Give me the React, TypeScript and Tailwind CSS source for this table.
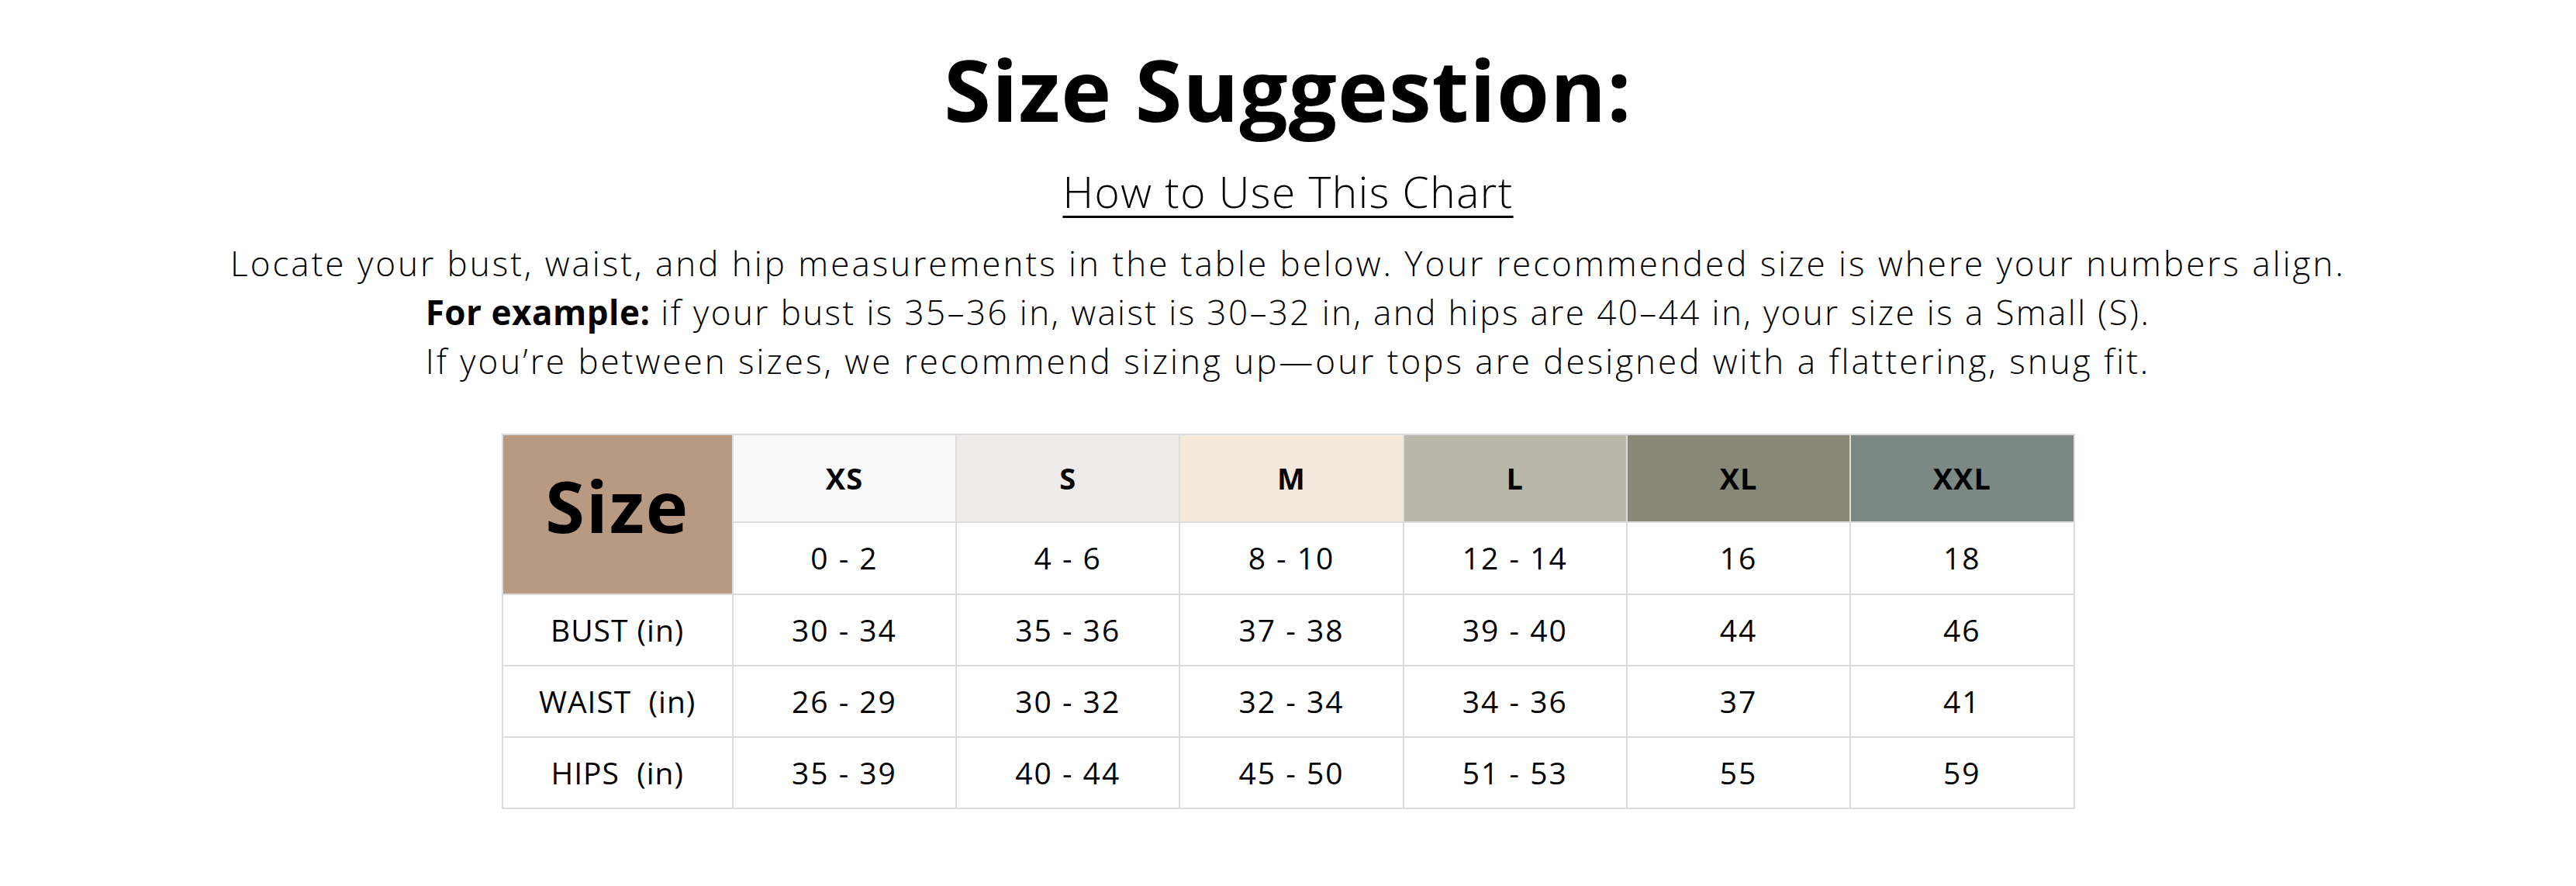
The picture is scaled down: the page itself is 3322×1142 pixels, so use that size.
import React from 'react';

const sizes = [
  { label: 'XS', range: '0 - 2', bust: '30 - 34', waist: '26 - 29', hips: '35 - 39', bg: 'bg-[#f9f9f9]' },
  { label: 'S', range: '4 - 6', bust: '35 - 36', waist: '30 - 32', hips: '40 - 44', bg: 'bg-[#efebea]' },
  { label: 'M', range: '8 - 10', bust: '37 - 38', waist: '32 - 34', hips: '45 - 50', bg: 'bg-[#f5e9db]' },
  { label: 'L', range: '12 - 14', bust: '39 - 40', waist: '34 - 36', hips: '51 - 53', bg: 'bg-[#b8b7a9]' },
  { label: 'XL', range: '16', bust: '44', waist: '37', hips: '55', bg: 'bg-[#888879]' },
  { label: 'XXL', range: '18', bust: '46', waist: '41', hips: '59', bg: 'bg-[#7b8884]' },
];

const rows: { name: string; key: 'bust' | 'waist' | 'hips' }[] = [
  { name: 'BUST (in)', key: 'bust' },
  { name: 'WAIST\u00a0 (in)', key: 'waist' },
  { name: 'HIPS\u00a0 (in)', key: 'hips' },
];

const cell = 'border-2 border-[#dcdcdc] text-center align-middle';

export default function App() {
  return (
    <div className="w-[3322px] h-[1142px] bg-white flex flex-col items-center text-black font-['Open_Sans',sans-serif]">
      <h1 className="mt-[46px] text-[110px] leading-[136px] font-bold tracking-[1px]">Size Suggestion:</h1>

      <h2 className="mt-[30px] text-[55px] leading-[70px] font-light tracking-[1.5px] underline decoration-[3px] underline-offset-[10px]">
        How to Use This Chart
      </h2>

      {/* intro copy */}
      <div className="mt-[26px] text-[44px] leading-[63px] font-light tracking-[3px] text-center">
        <p>Locate your bust, waist, and hip measurements in the table below. Your recommended size is where your numbers align.</p>
        <p className="tracking-[2.4px]">
          <span className="font-bold tracking-[0.5px]">For example:</span> if your bust is 35–36 in, waist is 30–32 in, and hips are 40–44 in, your size is a Small (S).
        </p>
        <p>If you’re between sizes, we recommend sizing up—our tops are designed with a flattering, snug fit.</p>
      </div>

      <table className="mt-[62px] border-collapse table-fixed w-[2029px]">
        <colgroup>
          <col className="w-[297px]" />
          {sizes.map((s) => (
            <col key={s.label} className="w-[288px]" />
          ))}
        </colgroup>
        <tbody>
          <tr className="h-[113px]">
            <td rowSpan={2} className={`${cell} bg-[#b89a82] text-[92px] font-bold tracking-[2px] pb-[22px]`}>
              Size
            </td>
            {sizes.map((s) => (
              <td key={s.label} className={`${cell} ${s.bg} text-[38px] font-bold tracking-[1px]`}>
                {s.label}
              </td>
            ))}
          </tr>
          <tr className="h-[93px]">
            {sizes.map((s) => (
              <td key={s.label} className={`${cell} text-[39px] tracking-[2px]`}>
                {s.range}
              </td>
            ))}
          </tr>
          {rows.map((r) => (
            <tr key={r.key} className="h-[92px]">
              <td className={`${cell} text-[39px] tracking-[1px]`}>{r.name}</td>
              {sizes.map((s) => (
                <td key={s.label} className={`${cell} text-[39px] tracking-[2px]`}>
                  {s[r.key]}
                </td>
              ))}
            </tr>
          ))}
        </tbody>
      </table>
    </div>
  );
}
